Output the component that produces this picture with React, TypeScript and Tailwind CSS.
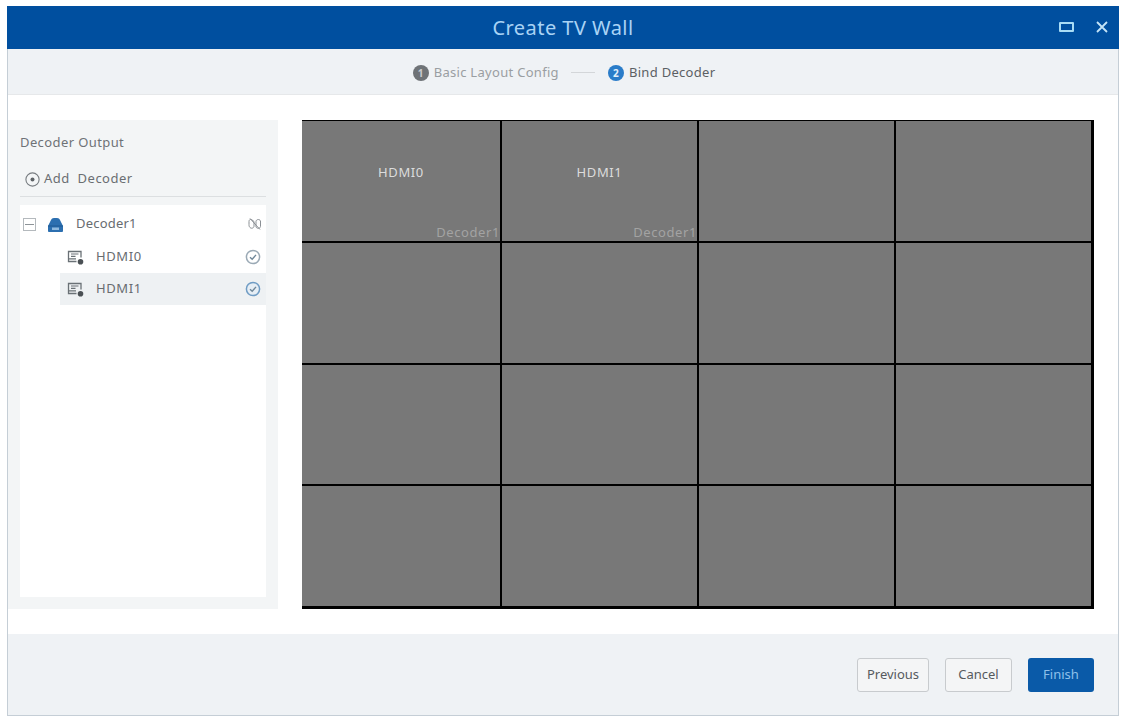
import React from "react";

const font = { fontFamily: '"Noto Sans", "Open Sans", sans-serif' };

function Monitor() {
  return (
    <svg width="17" height="16" viewBox="0 0 17 16" fill="none" className="shrink-0">
      <path d="M14 8.5V2.5H1.5V12.5H9.5" stroke="#6a7176" strokeWidth="1.3" />
      <path d="M1.5 9.8H9M4 5H11.5M4 7.3H8.5" stroke="#6a7176" strokeWidth="1.2" />
      <circle cx="13.5" cy="12.8" r="2.8" fill="#4a5054" />
    </svg>
  );
}

function Check({ strong }: { strong?: boolean }) {
  return (
    <svg width="16" height="16" viewBox="0 0 16 16" fill="none" className="shrink-0">
      <circle cx="8" cy="8" r="6.6" stroke={strong ? "#6f9cc4" : "#9aa9b5"} strokeWidth="1.5" fill={strong ? "#e6eef5" : "none"} />
      <path d="M5 8.2L7.2 10.3L11 5.9" stroke="#6f8799" strokeWidth="1.4" />
    </svg>
  );
}

function Cell({ name }: { name?: string }) {
  return (
    <div className="bg-[#787878] flex flex-col min-h-0 overflow-hidden">
      {name && (
        <>
          <div className="pt-[41px] text-center text-[13px] tracking-[0.6px] leading-[20px] text-[#dcdcdc]">{name}</div>
          <div className="mt-auto text-right text-[13px] tracking-[0.6px] leading-[16px] pb-[1px] text-[#a3a3a3] whitespace-nowrap">Decoder1</div>
        </>
      )}
    </div>
  );
}

export default function App() {
  return (
    <div className="w-[1123px] h-[717px] bg-white pt-[6px] pl-[7px] overflow-hidden" style={font}>
      <div className="w-[1112px] h-[710px] flex flex-col bg-white border-l border-r border-b border-[#c5ced6]">
        <header className="h-[43px] shrink-0 -mx-px bg-[#004f9f] flex items-center justify-center relative">
          <span className="text-[20px] text-[#a9d3f5] tracking-[0.45px]">Create TV Wall</span>
          <div className="absolute right-[11px] top-[15px] flex items-center gap-[22px]">
            <span className="block w-[15px] h-[10px] border-2 border-[#a9dcf5] rounded-[1px]" />
            <svg width="12" height="12" viewBox="0 0 12 12" fill="none">
              <path d="M1 1L11 11M11 1L1 11" stroke="#c4e4f7" strokeWidth="1.8" />
            </svg>
          </div>
        </header>

        <div className="h-[46px] shrink-0 bg-[#eff2f5] border-b border-[#e6e8ea] flex items-center justify-center pl-[2px] pt-[2px] text-[13px]">
          <span className="w-[16px] h-[16px] rounded-full bg-[#6f7377] text-[#c9cccf] text-[10px] leading-[16px] text-center font-bold">1</span>
          <span className="ml-[5px] text-[#9a9ea2] tracking-[0.3px]">Basic Layout Config</span>
          <span className="ml-[12px] w-[24px] h-px bg-[#d3d6d9]" />
          <span className="ml-[13px] w-[16px] h-[16px] rounded-full bg-[#2a7cc9] text-[#e3f0fb] text-[10px] leading-[16px] text-center font-bold">2</span>
          <span className="ml-[5px] text-[#5b6064] tracking-[0.3px]">Bind Decoder</span>
        </div>

        <main className="flex-1 min-h-0 flex items-start pt-[25px] pb-[25px] pr-[24px]">
          <aside className="w-[270px] h-[489px] shrink-0 bg-[#f3f5f6] flex flex-col px-[12px] pb-[12px]">
            <div className="pt-[12px] text-[13px] leading-[20px] tracking-[0.4px] text-[#6e7276]">Decoder Output</div>
            <div className="mt-[10px] h-[35px] flex items-center gap-[4px] pl-[5px] border-b border-[#dcdfe1] text-[13px] text-[#6a6e72]">
              <svg width="15" height="15" viewBox="0 0 15 15" fill="none" className="shrink-0">
                <circle cx="7.5" cy="7.5" r="6.6" stroke="#777c80" strokeWidth="1.1" />
                <circle cx="7.5" cy="7.5" r="2" fill="#5d6266" />
              </svg>
              <span className="tracking-[0.5px]">Add&nbsp; Decoder</span>
            </div>
            <div className="mt-[8px] flex-1 bg-white text-[13px] text-[#686c70]">
              <div className="h-[36px] flex items-center pl-[3px] pr-[3px] pt-[2px]">
                <span className="w-[13px] h-[13px] border border-[#b4b9bd] flex items-center justify-center shrink-0">
                  <span className="w-[9px] h-px bg-[#8d9398]" />
                </span>
                <svg width="17" height="15" viewBox="0 0 17 15" className="ml-[11px] shrink-0">
                  <path d="M1 14V9L4 3C4.5 1.8 5.5 1 7 1H10C11.5 1 12.5 1.8 13 3L16 9V14C16 14.5 15.5 15 15 15H2C1.500 15 1 14.500 1 14Z" fill="#2c6fb0" />
                  <path d="M1 9H16" stroke="#1f5a94" strokeWidth="1" />
                  <rect x="5" y="10.500" width="7" height="2.500" fill="#8fb9de" />
                </svg>
                <span className="ml-[12px] flex-1 tracking-[0.2px]">Decoder1</span>
                <svg width="16" height="16" viewBox="0 0 16 16" fill="none" className="shrink-0">
                  <path d="M2 5.500C2 3.500 3.500 3 4.500 3.500L7 5.500V10C7 12 4.500 13 3 11.500C2 10.500 2 9.500 2 8.500ZM9 5.500C9 3.500 12.500 2.500 13.500 5V10.500C13.500 12.500 10 13 9 11Z" stroke="#8b9095" strokeWidth="1" />
                  <path d="M3 2.500L13 13.500" stroke="#8b9095" strokeWidth="1" />
                </svg>
              </div>
              <div className="h-[32px] ml-[40px] flex items-center pl-[7px] pr-[5px]">
                <Monitor />
                <span className="ml-[12px] flex-1 tracking-[0.6px]">HDMI0</span>
                <Check />
              </div>
              <div className="h-[32px] ml-[40px] flex items-center pl-[7px] pr-[5px] bg-[#eef1f3]">
                <Monitor />
                <span className="ml-[12px] flex-1 tracking-[0.6px]">HDMI1</span>
                <Check strong />
              </div>
            </div>
          </aside>

          <section className="ml-[24px] w-[792px] h-[489px] shrink-0 bg-black pt-px pr-[3px] pb-[3px] grid grid-cols-[198px_195px_195px_195px] grid-rows-[120px_120px_119px_120px] gap-[2px]">
            <Cell name="HDMI0" />
            <Cell name="HDMI1" />
            {Array.from({ length: 14 }).map((_, i) => (
              <Cell key={i} />
            ))}
          </section>
        </main>

        <footer className="h-[81px] shrink-0 bg-[#eff2f5] flex items-start justify-end gap-[16px] pt-[24px] pr-[24px] text-[13px]">
          <button className="w-[72px] h-[34px] bg-[#f4f5f6] border border-[#c8cbce] rounded-[3px] text-[#565a5e]">Previous</button>
          <button className="w-[67px] h-[34px] bg-[#f4f5f6] border border-[#c8cbce] rounded-[3px] text-[#565a5e]">Cancel</button>
          <button className="w-[66px] h-[34px] bg-[#0a5aa8] rounded-[3px] text-[#8fc0ea]">Finish</button>
        </footer>
      </div>
    </div>
  );
}
